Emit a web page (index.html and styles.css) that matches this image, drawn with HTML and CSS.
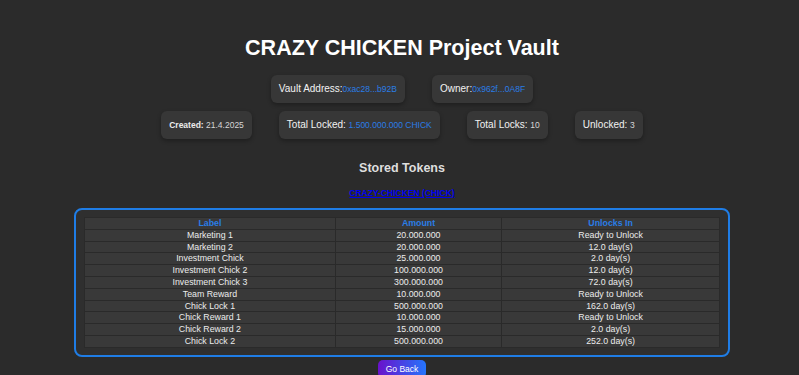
FILE: index.html
```html
<!DOCTYPE html>
<html lang="en">
<head>
<meta charset="utf-8">
<title>CRAZY CHICKEN Project Vault</title>
<link rel="stylesheet" href="styles.css">
</head>
<body>
<div class="page">
  <h1 class="title">CRAZY CHICKEN Project Vault</h1>
  <div class="cards row-one">
    <div class="card">Vault Address:<span class="val blue">0xac28...b92B</span></div>
    <div class="card">Owner:<span class="val blue">0x962f...0A8F</span></div>
  </div>
  <div class="cards row-two">
    <div class="card small"><strong>Created:</strong> 21.4.2025</div>
    <div class="card">Total Locked: <span class="val blue">1.500.000.000 CHICK</span></div>
    <div class="card">Total Locks: <span class="val">10</span></div>
    <div class="card">Unlocked: <span class="val">3</span></div>
  </div>
  <h3 class="subtitle">Stored Tokens</h3>
  <a class="token-link" href="#">CRAZY-CHICKEN (CHICK)</a>
  <div class="table-box">
    <table class="locks">
      <colgroup>
        <col class="c-label">
        <col class="c-amount">
        <col class="c-unlock">
      </colgroup>
      <thead>
        <tr><th>Label</th><th>Amount</th><th>Unlocks In</th></tr>
      </thead>
      <tbody>
        <tr><td>Marketing 1</td><td>20.000.000</td><td>Ready to Unlock</td></tr>
        <tr><td>Marketing 2</td><td>20.000.000</td><td>12.0 day(s)</td></tr>
        <tr><td>Investment Chick</td><td>25.000.000</td><td>2.0 day(s)</td></tr>
        <tr><td>Investment Chick 2</td><td>100.000.000</td><td>12.0 day(s)</td></tr>
        <tr><td>Investment Chick 3</td><td>300.000.000</td><td>72.0 day(s)</td></tr>
        <tr><td>Team Reward</td><td>10.000.000</td><td>Ready to Unlock</td></tr>
        <tr><td>Chick Lock 1</td><td>500.000.000</td><td>162.0 day(s)</td></tr>
        <tr><td>Chick Reward 1</td><td>10.000.000</td><td>Ready to Unlock</td></tr>
        <tr><td>Chick Reward 2</td><td>15.000.000</td><td>2.0 day(s)</td></tr>
        <tr><td>Chick Lock 2</td><td>500.000.000</td><td>252.0 day(s)</td></tr>
      </tbody>
    </table>
  </div>
  <button class="back" type="button">Go Back</button>
</div>
</body>
</html>
```
FILE: styles.css
```css
html, body {
  margin: 0;
  padding: 0;
  background: #2b2b2b;
  color: #ececec;
  font-family: "Liberation Sans", Arial, sans-serif;
}

.page {
  display: flex;
  flex-direction: column;
  align-items: center;
  padding: 0 69px 0 74px;
}

.title {
  margin: 36px 0 0;
  font-size: 21.5px;
  line-height: 24px;
  font-weight: bold;
  color: #ffffff;
}

.cards {
  display: flex;
  align-items: center;
  gap: 27px;
}

.row-one {
  margin-top: 15px;
}

.row-two {
  margin-top: 8px;
}

.card {
  background: #373737;
  border-radius: 6px;
  padding: 8px;
  font-size: 10px;
  line-height: 12px;
  color: #f2f2f2;
  box-shadow: 0 2px 4px rgba(0, 0, 0, 0.3);
}

.card.small {
  font-size: 8.5px;
  color: #d6d6d6;
}

.card.small strong {
  color: #ececec;
}

.val {
  font-size: 8.5px;
  color: #d6d6d6;
}

.val.blue {
  color: #2a7de6;
}

.subtitle {
  margin: 22px 0 0;
  font-size: 12.5px;
  line-height: 15px;
  font-weight: bold;
  color: #dedede;
}

.token-link {
  margin-top: 12px;
  font-size: 8.5px;
  line-height: 10px;
  font-weight: bold;
  color: #0000ee;
  text-decoration: underline;
}

.table-box {
  margin-top: 10px;
  align-self: stretch;
  border: 2px solid #1f7de6;
  border-radius: 8px;
  padding: 7px 8px;
  background: #2f2f2f;
}

.locks {
  width: 100%;
  border-collapse: collapse;
  font-size: 8.8px;
  line-height: 10.8px;
  color: #ececec;
}

.c-label { width: 39.5%; }
.c-amount { width: 26.2%; }
.c-unlock { width: 34.3%; }

.locks th,
.locks td {
  padding: 0;
  border: 1px solid #2a2a2a;
  background: #393939;
  text-align: center;
  white-space: nowrap;
}

.locks th {
  color: #2a7de6;
  font-weight: bold;
}

.back {
  margin-top: 3px;
  padding: 4px 8px;
  border: none;
  border-radius: 5px;
  background: linear-gradient(90deg, #6a11cb, #2575fc);
  color: #ffffff;
  font-family: "Liberation Sans", Arial, sans-serif;
  font-size: 8.5px;
  line-height: 10px;
}
```
